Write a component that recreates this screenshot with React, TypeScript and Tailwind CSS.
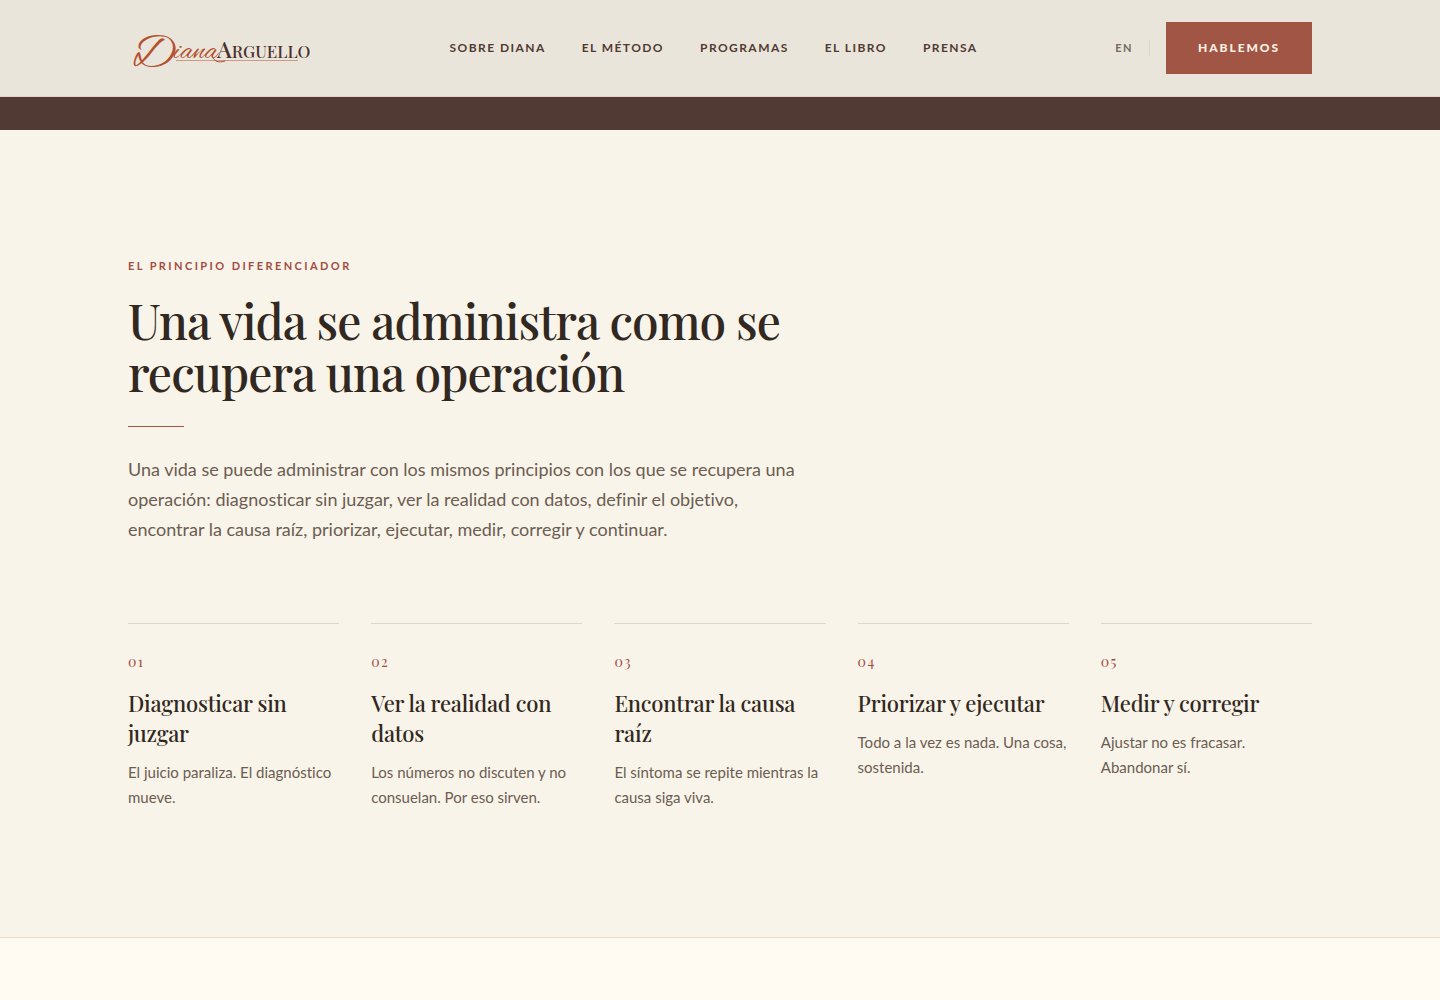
const navItems = [
  { label: 'Sobre Diana', href: '#sobre-diana' },
  { label: 'El Método', href: '#metodo' },
  { label: 'Programas', href: '#programas' },
  { label: 'El Libro', href: '#libro' },
  { label: 'Prensa', href: '#prensa' },
];

const steps = [
  { number: '01', title: 'Diagnosticar sin juzgar', text: 'El juicio paraliza. El diagnóstico mueve.' },
  { number: '02', title: 'Ver la realidad con datos', text: 'Los números no discuten y no consuelan. Por eso sirven.' },
  { number: '03', title: 'Encontrar la causa raíz', text: 'El síntoma se repite mientras la causa siga viva.' },
  { number: '04', title: 'Priorizar y ejecutar', text: 'Todo a la vez es nada. Una cosa, sostenida.' },
  { number: '05', title: 'Medir y corregir', text: 'Ajustar no es fracasar. Abandonar sí.' },
];

const serif = "font-['Playfair_Display','Liberation_Serif',serif]";

function Logo() {
  return (
    <svg width="184" height="72" viewBox="0 -12 184 72" role="img" aria-label="Diana Arguello">
      <path d="M48 36.5H170" fill="none" stroke="#b5502f" opacity="0.5" />
      <path d="M84 32C86 38 91 39 97 37" fill="none" stroke="#b5502f" strokeLinecap="round" />
      <text x="5" y="40" fill="#b5502f" fontFamily="'Alex Brush', 'Great Vibes', cursive" fontSize="46">
        D<tspan x="46" y="34" fontSize="30">iana</tspan>
      </text>
      <text x="89" y="34" fill="#4c302b" fontFamily="'Playfair Display', 'Liberation Serif', serif" fontSize="23" fontWeight="500">
        A<tspan fontSize="17">RGUELLO</tspan>
      </text>
    </svg>
  );
}

function Header() {
  return (
    <header className="border-b border-[#e3d3c6] bg-[#eae5da]">
      <div className="mx-auto flex h-24 max-w-[1248px] items-center justify-between px-8">
        <a href="#inicio" className="shrink-0">
          <Logo />
        </a>
        <nav aria-label="Principal" className="flex gap-9">
          {navItems.map((item) => (
            <a
              key={item.href}
              href={item.href}
              className="text-[12px] leading-5 font-bold tracking-[0.12em] whitespace-nowrap text-[#503a33] uppercase"
            >
              {item.label}
            </a>
          ))}
        </nav>
        <div className="flex items-center gap-4">
          <a href="#en" className="text-[11px] leading-4 font-bold tracking-[0.14em] text-[#756a60]">
            EN
          </a>
          <span className="h-4 w-px bg-[#ddd7ca]" />
          <button
            type="button"
            className="h-[52px] bg-[#a15545] px-8 text-[12px] font-black tracking-[0.16em] text-[#fbf0e4] uppercase"
          >
            Hablemos
          </button>
        </div>
      </div>
    </header>
  );
}

export default function App() {
  return (
    <div className="min-h-screen bg-[#fffbf3] font-['Lato',sans-serif] text-[#322822] [font-variant-ligatures:no-common-ligatures]">
      <Header />
      <div className="h-[33px] bg-[#503a33]" />
      <main className="border-b border-[#eadbc5] bg-[#f9f4e9]">
        <section className="mx-auto max-w-[1248px] px-8 pt-32 pb-[127px]">
          <div className="max-w-[672px]">
            <p className="text-[11px] leading-4 font-bold tracking-[0.22em] text-[#a14d43] uppercase">
              El principio diferenciador
            </p>
            <h1 className={`${serif} mt-5 text-[48px] leading-[52px] font-medium tracking-[-0.02em]`}>
              Una vida se administra como se recupera una operación
            </h1>
            <div className="mt-7 h-px w-14 bg-[#a15545]" />
            <p className="mt-[27px] text-[18px] leading-[30px] text-[#6b5d52]">
              Una vida se puede administrar con los mismos principios con los que se recupera una
              operación: diagnosticar sin juzgar, ver la realidad con datos, definir el objetivo,
              encontrar la causa raíz, priorizar, ejecutar, medir, corregir y continuar.
            </p>
          </div>
          <ol className="mt-[79px] grid grid-cols-5 gap-8">
            {steps.map((step) => (
              <li key={step.number} className="border-t border-[#ded7ca] pt-7">
                <p className={`${serif} text-[14px] leading-5 tracking-[0.1em] text-[#a14d43]`}>{step.number}</p>
                <h2 className={`${serif} mt-4 text-[22px] leading-[30px] font-medium tracking-[-0.01em]`}>{step.title}</h2>
                <p className="mt-3 text-[15px] leading-[25px] text-[#6b5d52]">{step.text}</p>
              </li>
            ))}
          </ol>
        </section>
      </main>
    </div>
  );
}
